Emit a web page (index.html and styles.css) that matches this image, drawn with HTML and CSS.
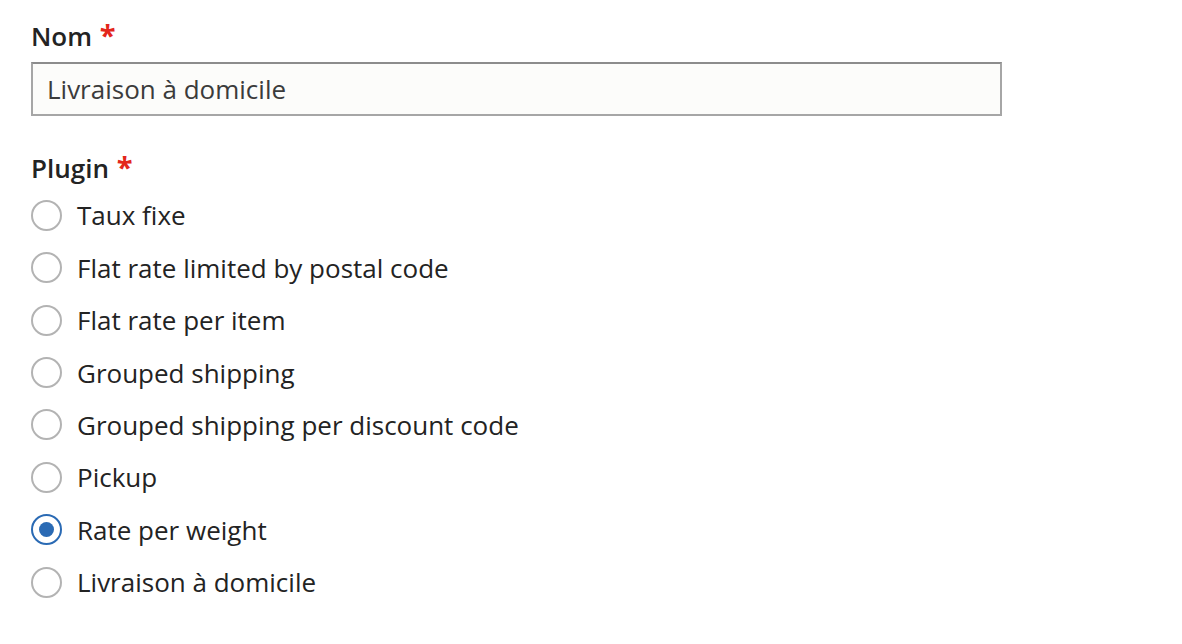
FILE: index.html
```html
<!DOCTYPE html>
<html lang="fr">
<head>
<meta charset="utf-8">
<link rel="stylesheet" href="styles.css">
</head>
<body>
<div class="form">
  <div class="field">
    <label class="label">Nom <span class="req">*</span></label>
    <div class="input">Livraison à domicile</div>
  </div>
  <div class="field plugin">
    <div class="label">Plugin <span class="req">*</span></div>
    <ul class="options">
      <li class="option"><span class="radio"></span><span class="text">Taux fixe</span></li>
      <li class="option"><span class="radio"></span><span class="text">Flat rate limited by postal code</span></li>
      <li class="option"><span class="radio"></span><span class="text">Flat rate per item</span></li>
      <li class="option"><span class="radio"></span><span class="text">Grouped shipping</span></li>
      <li class="option"><span class="radio"></span><span class="text">Grouped shipping per discount code</span></li>
      <li class="option"><span class="radio"></span><span class="text">Pickup</span></li>
      <li class="option"><span class="radio checked"></span><span class="text">Rate per weight</span></li>
      <li class="option"><span class="radio"></span><span class="text">Livraison à domicile</span></li>
    </ul>
  </div>
</div>
</body>
</html>
```
FILE: styles.css
```css
html, body {
  margin: 0;
  padding: 0;
  background: #ffffff;
}
body {
  font-family: "Open Sans", "Noto Sans", sans-serif;
  color: #232323;
}
.form {
  padding: 18px 31px 0 31px;
}
.label {
  display: block;
  font-size: 26px;
  line-height: 36px;
  font-weight: 600;
  color: #232323;
}
.req {
  color: #e3261b;
  font-weight: 700;
  font-size: 29px;
  line-height: 20px;
  margin-left: 1px;
}
.input {
  margin-top: 8px;
  width: 971px;
  height: 54px;
  box-sizing: border-box;
  border: 2px solid #a6a6a6;
  border-top-color: #8c8c8c;
  background: #fcfcfa;
  padding: 0 14px;
  font-size: 26px;
  line-height: 51px;
  color: #3b3b3b;
}
.plugin {
  margin-top: 34px;
}
.options {
  list-style: none;
  margin: 3px 0 0 0;
  padding: 0;
}
.option {
  display: flex;
  align-items: center;
  height: 52.45px;
}
.radio {
  width: 31px;
  height: 31px;
  box-sizing: border-box;
  border: 2px solid #b3b3b3;
  border-radius: 50%;
  background: #fff;
  flex: none;
  display: flex;
  align-items: center;
  justify-content: center;
}
.radio.checked {
  border-color: #2a6ab4;
}
.radio.checked::after {
  content: "";
  width: 15px;
  height: 15px;
  border-radius: 50%;
  background: #2a6ab4;
}
.text {
  margin-left: 15px;
  font-size: 26px;
  color: #232323;
}
```
